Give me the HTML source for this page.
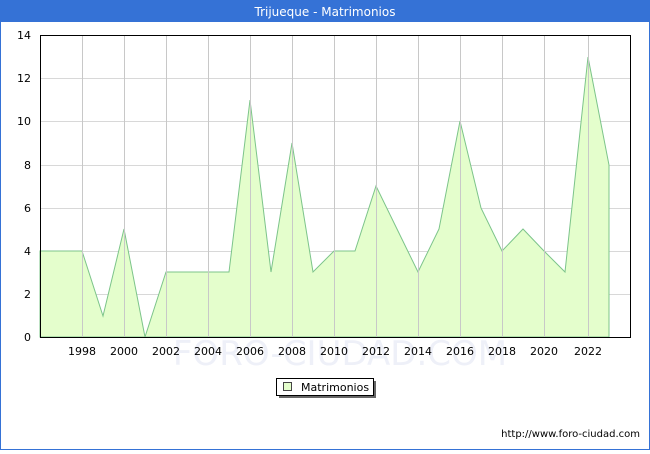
<!DOCTYPE html>
<html><head><style>
body{margin:0;width:650px;height:450px;overflow:hidden;font-family:"DejaVu Sans","Liberation Sans",sans-serif;}
</style></head><body>
<svg width="650" height="450" xmlns="http://www.w3.org/2000/svg" font-family="DejaVu Sans, Liberation Sans, sans-serif">
<rect x="0.5" y="0.5" width="649" height="449" fill="#fff" stroke="#3572D6"/>
<rect x="0" y="0" width="650" height="22" fill="#3572D6"/>
<text x="325" y="16" fill="#fff" font-size="12" text-anchor="middle">Trijueque - Matrimonios</text>
<text x="340" y="365" fill="#eef0f8" font-size="34" text-anchor="middle">FORO-CIUDAD.COM</text>
<g stroke="#d8d8d8" stroke-width="1">
<line x1="40" y1="294.5" x2="630" y2="294.5"/><line x1="40" y1="251.5" x2="630" y2="251.5"/><line x1="40" y1="208.5" x2="630" y2="208.5"/><line x1="40" y1="165.5" x2="630" y2="165.5"/><line x1="40" y1="121.5" x2="630" y2="121.5"/><line x1="40" y1="78.5" x2="630" y2="78.5"/>
</g>
<polygon fill="#e4fecc" stroke="#7cc48a" stroke-width="1" points="40,337 40,251 61,251 82,251 103,316 124,229 145,337 166,272 187,272 208,272 229,272 250,100 271,272 292,143 313,272 334,251 355,251 376,186 397,229 418,272 439,229 460,121 481,208 502,251 523,229 544,251 565,272 588,57 609,165 609,337"/>
<g stroke="#c8c8c8" stroke-width="1">
<line x1="82.5" y1="35" x2="82.5" y2="337"/><line x1="124.5" y1="35" x2="124.5" y2="337"/><line x1="166.5" y1="35" x2="166.5" y2="337"/><line x1="208.5" y1="35" x2="208.5" y2="337"/><line x1="250.5" y1="35" x2="250.5" y2="337"/><line x1="292.5" y1="35" x2="292.5" y2="337"/><line x1="334.5" y1="35" x2="334.5" y2="337"/><line x1="376.5" y1="35" x2="376.5" y2="337"/><line x1="418.5" y1="35" x2="418.5" y2="337"/><line x1="460.5" y1="35" x2="460.5" y2="337"/><line x1="502.5" y1="35" x2="502.5" y2="337"/><line x1="544.5" y1="35" x2="544.5" y2="337"/><line x1="588.5" y1="35" x2="588.5" y2="337"/>
</g>
<rect x="40.5" y="35.5" width="590" height="302" fill="none" stroke="#000"/>
<g font-size="11" fill="#000" text-anchor="end">
<text x="31" y="341">0</text><text x="31" y="298">2</text><text x="31" y="255">4</text><text x="31" y="212">6</text><text x="31" y="169">8</text><text x="31" y="125">10</text><text x="31" y="82">12</text><text x="31" y="39">14</text>
</g>
<g font-size="11" fill="#000" text-anchor="middle">
<text x="82" y="355">1998</text><text x="124" y="355">2000</text><text x="166" y="355">2002</text><text x="208" y="355">2004</text><text x="250" y="355">2006</text><text x="292" y="355">2008</text><text x="334" y="355">2010</text><text x="376" y="355">2012</text><text x="418" y="355">2014</text><text x="460" y="355">2016</text><text x="502" y="355">2018</text><text x="544" y="355">2020</text><text x="588" y="355">2022</text>
</g>
<rect x="279" y="381" width="97" height="17" fill="#666"/>
<rect x="276.5" y="378.5" width="97" height="17" fill="#fff" stroke="#000"/>
<rect x="283.5" y="382.5" width="8" height="8" fill="#e4fecc" stroke="#444"/>
<text x="301" y="391" font-size="11">Matrimonios</text>
<text x="640" y="437" font-size="10" text-anchor="end">http://www.foro-ciudad.com</text>
</svg>
</body></html>
